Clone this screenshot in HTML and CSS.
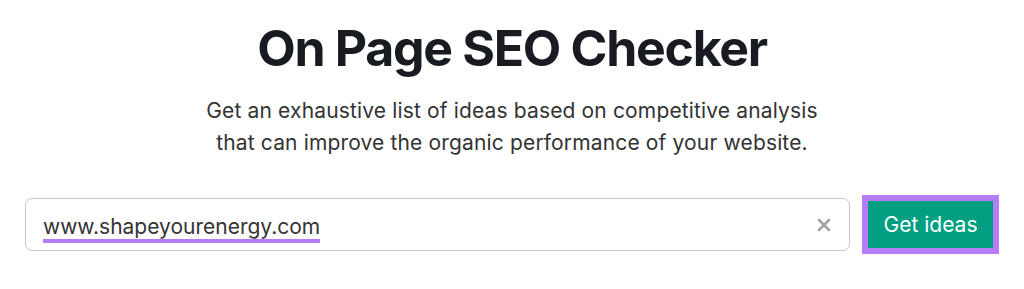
FILE: index.html
```html
<!DOCTYPE html>
<html lang="en">
<head>
    <meta charset="UTF-8">
    <meta name="viewport" content="width=device-width, initial-scale=1.0">
    <title>On Page SEO Checker</title>
    <link rel="stylesheet" href="styles.css">
</head>
<body>
    <main class="hero">
        <h1 class="title">On Page SEO Checker</h1>
        <p class="subtitle">Get an exhaustive list of ideas based on competitive analysis<br>that can improve the organic performance of your website.</p>

        <form class="search">
            <div class="field">
                <span class="field-value">www.shapeyourenergy.com</span>
                <button type="button" class="clear" aria-label="Clear">
                    <svg width="14" height="14" viewBox="0 0 14 14">
                        <path d="M2 2 L12 12 M12 2 L2 12" stroke="#a4a6ae" stroke-width="2.8" stroke-linecap="round"/>
                    </svg>
                </button>
            </div>
            <div class="highlight">
                <button type="button" class="submit">Get ideas</button>
            </div>
        </form>
    </main>
</body>
</html>
```

FILE: styles.css
```css
body {
    margin: 0;
    background: #fff;
    font-family: Inter, "Noto Sans", sans-serif;
    color: #191b23;
}
.hero {
    display: flex;
    flex-direction: column;
    align-items: center;
    padding-top: 20px;
}
.title {
    margin: 0;
    font-size: 50px;
    font-weight: 700;
    line-height: 56px;
    letter-spacing: -1.3px;
}
.subtitle {
    margin: 19px 0 0;
    font-size: 21px;
    line-height: 32px;
    letter-spacing: 0.15px;
    color: #333;
    text-align: center;
}
.search {
    display: flex;
    align-items: center;
    gap: 12px;
    margin-top: 36px;
    width: 974px;
}
.field {
    flex: 1;
    height: 53px;
    box-sizing: border-box;
    border: 1px solid #c5c7cf;
    border-radius: 7px;
    display: flex;
    align-items: center;
    justify-content: space-between;
    padding: 0 18px 0 17px;
}
.field-value {
    font-size: 21px;
    color: #333;
    border-bottom: 4px solid #b77cf9;
    line-height: 24px;
    padding-top: 9px;
}
.clear {
    background: none;
    border: none;
    padding: 0;
    display: flex;
    cursor: pointer;
}
.highlight {
    background: #b77cf9;
    padding: 6px;
}
.submit {
    display: block;
    width: 125px;
    height: 47px;
    background: #009f81;
    color: #fff;
    border: none;
    font-family: inherit;
    font-size: 21px;
    cursor: pointer;
}
```
